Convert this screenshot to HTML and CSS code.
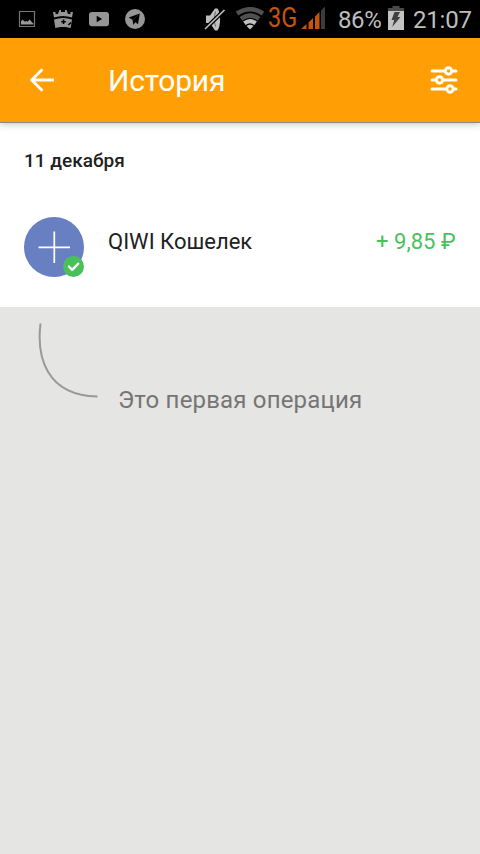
FILE: index.html
```html
<!DOCTYPE html>
<html lang="ru">
<head>
<meta charset="utf-8">
<title>История</title>
<link rel="stylesheet" href="styles.css">
</head>
<body>
<div class="status">
  <div class="notifications">
    <svg width="20" height="20" viewBox="0 0 20 20"><path d="M2.500 2.500h15v15h-15z" fill="none" stroke="#777" stroke-width="1.200"/><path d="M4 15.500v-3l1.500-2 1.500 1.500 1 .8 1.500-.8 1.500.5 1.500-2 1.500 1.500 1 1.500 1.500 1v1z" fill="#999"/></svg>
    <svg width="20" height="20" viewBox="0 0 20 20"><g fill="#969696"><path d="M0 3h2.500v2H5l1.500-4H8v2h4V1h1.500L15 5h2.500V3H20l-1 5.500q-9-3-18 0z"/><path d="M1 10.500q9-3 18 0l-1.300 8.500-5.200-1h-5l-5.200 1z"/></g><path d="M10.500 10.500v4.600M8.200 12.800h4.600M15.500 16l2.500-2.500" stroke="#000" stroke-width="1.600"/></svg>
    <svg width="20" height="20" viewBox="0 0 20 20"><rect y="3" width="20" height="14.200" rx="3" fill="#969696"/><path d="M7.700 6.700v6.600l5.400-3.300z" fill="#000"/></svg>
    <svg width="20" height="20" viewBox="0 0 20 20"><circle cx="10" cy="10" r="10" fill="#969696"/><path d="M14.800 4.500 3.700 8.600l3.800 2.200.8 5.200 2-2.700 2.700 2z" fill="#000"/><path d="m8 11 5.300-5.100" stroke="#333" stroke-width=".6"/></svg>
  </div>
  <svg class="mute" width="22" height="24" viewBox="0 0 22 24"><path d="M2 8.500h4l5-7h2.500c3.500 4 3.500 18 0 22H11l-5-7.500H2z" fill="#bebebe"/><path d="M11.500 4.500c-1.500 5-1.500 10.500 0 15" fill="none" stroke="#666" stroke-width="1"/><path d="m1 22 19.500-19" stroke="#000" stroke-width="4"/><path d="m1 22 19.500-19" stroke="#bebebe" stroke-width="1.700"/></svg>
  <svg class="wifi" width="30" height="24" viewBox="0 0 30 24"><g fill="none" stroke="#505050" stroke-width="4.600"><path d="M2 6.500Q15-2 28 6.500"/><path d="M6 11.800Q15 5.200 24 11.800"/></g><path d="M9.400 16.200Q15 12 20.600 16.200" fill="none" stroke="#c0c0c0" stroke-width="4.200"/><path d="M11.500 19Q15 16.500 18.500 19L15 22.500z" fill="#c0c0c0"/></svg>
  <span class="network">3G</span>
  <svg class="signal" width="24" height="24" viewBox="0 0 24 24"><path d="M0 23l5.500-5v5zM7.500 16.500l4.500-4.500v11H7.500zM14 10.500l4.500-4.500v17H14z" fill="#c4550c"/><path d="M20 4.500 24 .5V23h-4z" fill="#3c3c3c"/></svg>
  <span class="charge">86%</span>
  <svg class="battery" width="16" height="24" viewBox="0 0 16 24"><path d="M4.500 0h7v2H16v3H0V2h4.500z" fill="#4a4a4a"/><path d="M0 5h16v19H0z" fill="#c3c3c3"/><path d="M6.500 6h5.500l-2.500 5h3L4.200 21l2-7H3.500z" fill="#3f3f3f"/></svg>
  <span class="clock">21:07</span>
</div>
<header class="toolbar">
  <svg class="back" width="24" height="24" viewBox="0 0 24 24"><path d="M12.500 1.200 1.700 12l10.800 10.800M1.700 12H24" fill="none" stroke="#fff" stroke-width="2.800"/></svg>
  <h1 class="title">История</h1>
  <svg class="filter" width="28" height="28" viewBox="0 0 28 28"><g fill="#ff9f05" stroke="#fff" stroke-width="3" stroke-linecap="round"><path d="M2 5h24M2 14h24M2 23h24"/><circle cx="18.500" cy="5" r="3.200"/><circle cx="9.500" cy="14" r="3.200"/><circle cx="20" cy="23" r="3.200"/></g></svg>
</header>
<main class="history">
  <h2 class="date">11 декабря</h2>
  <div class="operation">
    <svg class="avatar" width="60" height="60" viewBox="0 0 60 60"><circle cx="30" cy="30" r="30" fill="#687fc2"/><path d="M30.300 14.500v31.500M14.500 30.300h31.500" stroke="#fff" stroke-width="1.700"/><circle cx="49.500" cy="49.500" r="10.500" fill="#49c15b"/><path d="m44.900 49.500 3.300 3.400 6-6.300" fill="none" stroke="#fff" stroke-width="2.300" stroke-linecap="round" stroke-linejoin="round"/></svg>
    <span class="name">QIWI Кошелек</span>
    <span class="amount">+ 9,85 ₽</span>
  </div>
</main>
<section class="first">
  <svg class="curve" width="62" height="78" viewBox="0 0 62 78"><path d="M3.500 1.500C-.5 34 8.500 73.500 60.500 74.600" fill="none" stroke="#999997" stroke-width="2"/></svg>
  <p class="note">Это первая операция</p>
</section>
</body>
</html>
```
FILE: styles.css
```css
* { box-sizing: border-box; }
body {
  margin: 0;
  height: 854px;
  display: flex;
  flex-direction: column;
  background: #e5e5e3;
  font-family: Roboto, "Noto Sans", sans-serif;
  color: #212121;
}
svg { display: block; flex: none; }
h1, h2, p { margin: 0; }
span, h1, p { white-space: nowrap; }
.status {
  height: 38px;
  display: flex;
  align-items: center;
  padding-left: 17px;
  background: #000;
  color: #bebebe;
  font-size: 24px;
  line-height: 38px;
}
.notifications { display: flex; gap: 16px; width: 187px; }
.mute { margin-right: 9px; }
.wifi { margin-top: -1px; }
.network {
  width: 30px;
  margin-left: 3px;
  color: #c4550c;
  font-size: 27px;
  line-height: 36px;
  height: 38px;
  transform: scaleX(.87);
  transform-origin: left;
}
.signal { margin-left: 3px; margin-top: -2px; }
.charge { width: 50px; margin-left: 13px; padding-top: 1px; letter-spacing: -.4px; }
.battery { margin-top: -2px; }
.clock { margin-left: 9px; padding-top: 1px; letter-spacing: -.2px; }
.toolbar {
  position: relative;
  height: 84px;
  display: flex;
  align-items: center;
  padding: 0 22px 0 30px;
  background: #ff9f05;
  box-shadow: 0 1px 0 #888, 0 2px 7px rgba(0, 0, 0, .25);
}
.title {
  margin-left: 54px;
  flex: 1;
  color: #fff;
  font-size: 30px;
  font-weight: 400;
  line-height: 84px;
  padding-top: 2px;
  letter-spacing: -.2px;
}
.history { height: 185px; padding: 27px 24px 0; background: #fff; }
.date { font-size: 19px; font-weight: 500; line-height: 24px; }
.operation { display: flex; margin-top: 44px; height: 60px; }
.name { flex: 1; margin-left: 24px; font-size: 22px; line-height: 50px; }
.amount { margin-right: .5px; color: #49c15b; font-size: 22px; line-height: 50px; }
.first { display: flex; padding: 15px 0 0 37px; }
.note { margin: 62px 0 0 19px; color: #757575; font-size: 24px; line-height: 32px; letter-spacing: .18px; }
```
